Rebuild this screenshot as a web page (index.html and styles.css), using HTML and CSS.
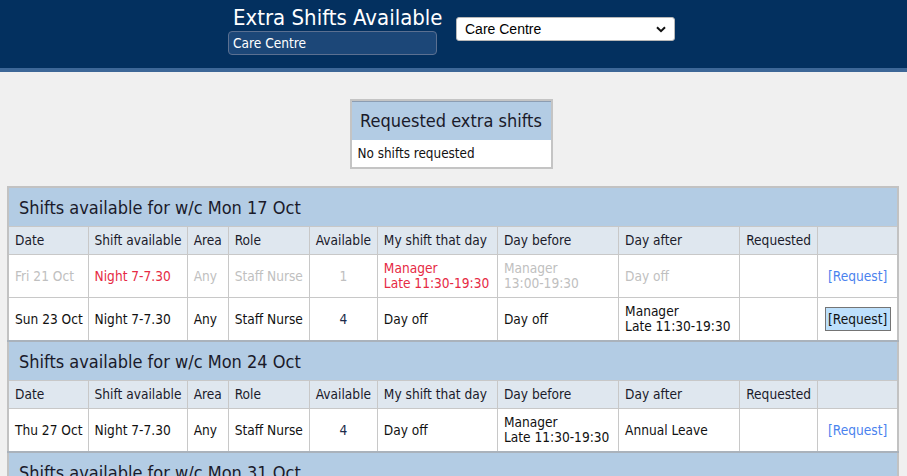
FILE: index.html
```html
<!DOCTYPE html>
<html lang="en">
<head>
<meta charset="utf-8">
<title>Extra Shifts Available</title>
<link rel="stylesheet" href="styles.css">
</head>
<body>
<header class="topbar">
  <div class="topbar-inner">
    <div class="title-block">
      <h1 class="title">Extra Shifts Available</h1>
      <div class="unit-box">Care Centre</div>
    </div>
    <div class="select-wrap">
      <select class="site-select"><option>Care Centre</option></select>
      <svg class="chev" width="10" height="7" viewBox="0 0 10 7"><path d="M1 1.2 L5 5.2 L9 1.2" fill="none" stroke="#111" stroke-width="2"/></svg>
    </div>
  </div>
</header>
<main class="content">
  <section class="requested">
    <div class="requested-head">Requested extra shifts</div>
    <div class="requested-body">No shifts requested</div>
  </section>

  <table class="shifts">
    <colgroup>
      <col class="c-date"><col class="c-shift"><col class="c-area"><col class="c-role"><col class="c-avail">
      <col class="c-my"><col class="c-before"><col class="c-after"><col class="c-req"><col class="c-act">
    </colgroup>
    <tbody>
      <tr class="week"><td colspan="10">Shifts available for w/c Mon 17 Oct</td></tr>
      <tr class="cols">
        <td>Date</td><td>Shift available</td><td>Area</td><td>Role</td><td class="num">Available</td>
        <td>My shift that day</td><td>Day before</td><td>Day after</td><td>Requested</td><td></td>
      </tr>
      <tr class="row">
        <td class="muted">Fri 21 Oct</td><td class="alert">Night 7-7.30</td><td class="muted">Any</td><td class="muted">Staff Nurse</td><td class="num muted">1</td>
        <td class="alert">Manager<br>Late 11:30-19:30</td><td class="muted">Manager<br>13:00-19:30</td><td class="muted">Day off</td><td></td>
        <td class="act"><a class="req-link" href="#">[Request]</a></td>
      </tr>
      <tr class="row">
        <td>Sun 23 Oct</td><td>Night 7-7.30</td><td>Any</td><td>Staff Nurse</td><td class="num navy">4</td>
        <td>Day off</td><td>Day off</td><td>Manager<br>Late 11:30-19:30</td><td></td>
        <td class="act"><button class="req-btn" type="button">[Request]</button></td>
      </tr>
    </tbody>
    <tbody>
      <tr class="week"><td colspan="10">Shifts available for w/c Mon 24 Oct</td></tr>
      <tr class="cols">
        <td>Date</td><td>Shift available</td><td>Area</td><td>Role</td><td class="num">Available</td>
        <td>My shift that day</td><td>Day before</td><td>Day after</td><td>Requested</td><td></td>
      </tr>
      <tr class="row">
        <td>Thu 27 Oct</td><td>Night 7-7.30</td><td>Any</td><td>Staff Nurse</td><td class="num navy">4</td>
        <td>Day off</td><td>Manager<br>Late 11:30-19:30</td><td>Annual Leave</td><td></td>
        <td class="act"><a class="req-link" href="#">[Request]</a></td>
      </tr>
    </tbody>
    <tbody>
      <tr class="week"><td colspan="10">Shifts available for w/c Mon 31 Oct</td></tr>
      <tr class="cols">
        <td>Date</td><td>Shift available</td><td>Area</td><td>Role</td><td class="num">Available</td>
        <td>My shift that day</td><td>Day before</td><td>Day after</td><td>Requested</td><td></td>
      </tr>
    </tbody>
  </table>
</main>
</body>
</html>
```

FILE: styles.css
```css
html {
  overflow: hidden;
}

body {
  margin: 0;
  background: #f0f0f0;
  font-family: "DejaVu Sans Condensed", "DejaVu Sans", sans-serif;
  font-size: 13.6px;
  color: #111;
}

.topbar {
  height: 68px;
  background: #03305f;
  border-bottom: 4px solid #3d6797;
}

.topbar-inner {
  display: flex;
  align-items: flex-start;
  gap: 19px;
  padding-left: 228px;
}

.title-block {
  display: flex;
  flex-direction: column;
  width: 209px;
  padding-top: 6px;
}

.title {
  margin: 0;
  padding-left: 5px;
  font-size: 22px;
  line-height: 24px;
  font-weight: normal;
  color: #fff;
  white-space: nowrap;
}

.unit-box {
  margin-top: 1px;
  width: 203px;
  height: 22px;
  padding-left: 4px;
  line-height: 23px;
  background: #1c4778;
  border: 1px solid #5b7091;
  border-radius: 4px;
  color: #fff;
  font-size: 13.6px;
}

.select-wrap {
  position: relative;
  margin-top: 17px;
}

.site-select {
  appearance: none;
  -webkit-appearance: none;
  display: block;
  width: 219px;
  height: 24px;
  padding: 0 0 0 8px;
  margin: 0;
  background: #fff;
  border: 1px solid #b8b8b8;
  border-radius: 3px;
  font-family: "Liberation Sans", Arial, sans-serif;
  font-size: 14px;
  color: #000;
}

.chev {
  position: absolute;
  right: 9px;
  top: 9px;
  pointer-events: none;
}

.content {
  padding: 0 8px 0 7px;
}

.requested {
  width: 199px;
  margin: 27px auto 17px;
  border: 2px solid #c4c4c4;
  background: #fff;
  position: relative;
  left: -2px;
}

.requested-head {
  height: 38px;
  line-height: 38px;
  border-top: 1px solid #8c9db2;
  background: #b3cce4;
  text-align: center;
  font-size: 18px;
  color: #1a1a2a;
}

.requested-body {
  height: 27px;
  line-height: 27px;
  padding-left: 6px;
  font-size: 13.4px;
  color: #111;
}

.shifts {
  width: 892px;
  table-layout: fixed;
  border-collapse: collapse;
  border: 2px solid #c2c2c2;
  background: #fff;
}

.c-date { width: 80px; }
.c-shift { width: 99px; }
.c-area { width: 41px; }
.c-role { width: 81px; }
.c-avail { width: 68px; }
.c-my { width: 120px; }
.c-before { width: 121px; }
.c-after { width: 121px; }
.c-req { width: 78px; }
.c-act { width: 80px; }

.shifts td {
  border: 1px solid #c8c8c8;
  padding: 0 6px;
  line-height: 15px;
  vertical-align: middle;
  white-space: nowrap;
  overflow: hidden;
}

.shifts tbody + tbody .week td {
  border-top: 2px solid #aab2bb;
}

.week td {
  height: 38px;
  padding-left: 10px;
  background: #b3cce4;
  font-size: 18px;
  color: #1a1a2a;
  border-left: 0;
  border-right: 0;
}

.cols td {
  height: 27px;
  background: #dfe7ef;
  color: #1a1a2a;
}

.row td {
  height: 42px;
}

.num {
  text-align: center;
}

.muted {
  color: #c0c0c0;
}

.alert {
  color: #e62a44;
}

.navy {
  color: #1b2a4a;
}

.act {
  text-align: center;
}

.shifts td.act {
  padding: 0;
}

.req-link {
  color: #4a82ee;
  text-decoration: none;
}

.req-btn {
  width: 66px;
  height: 24px;
  padding: 0;
  margin: 0;
  background: #bde0fc;
  border: 1px solid #747474;
  font-family: inherit;
  font-size: 13.6px;
  color: #111;
}
```
